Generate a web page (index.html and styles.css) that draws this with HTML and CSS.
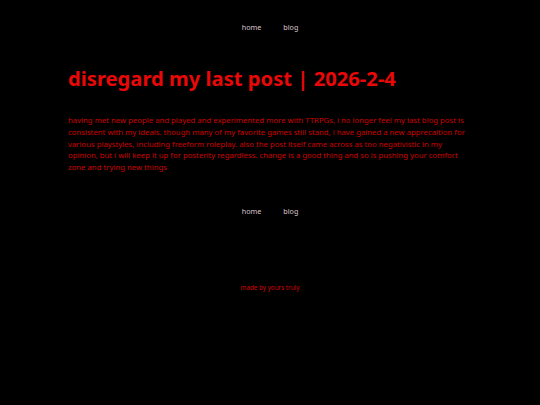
FILE: index.html
```html
<!DOCTYPE html>
<html>
<head>
<meta charset="utf-8">
<link rel="stylesheet" href="styles.css">
</head>
<body>
<nav class="nav top"><a href="#">home</a><a href="#">blog</a></nav>
<main class="content">
<h1 class="title">disregard my last post | 2026-2-4</h1>
<p class="text">having met new people and played and experimented more with TTRPGs, i no longer feel my last blog post is consistent with my ideals. though many of my favorite games still stand, i have gained a new apprecaition for various playstyles, including freeform roleplay. also the post itself came across as too negativistic in my opinion, but i will keep it up for posterity regardless. change is a good thing and so is pushing your comfort zone and trying new things</p>
</main>
<nav class="nav bottom"><a href="#">home</a><a href="#">blog</a></nav>
<footer class="footer">made by yours truly</footer>
</body>
</html>
```
FILE: styles.css
```css
html, body {
  margin: 0;
  padding: 0;
  background: #000;
}
body {
  font-family: "Noto Sans", "Open Sans", sans-serif;
  width: 540px;
  height: 405px;
}
.nav {
  display: flex;
  justify-content: center;
  gap: 22px;
  font-size: 7.2px;
  line-height: 11px;
}
.nav a {
  color: #dcc4cc;
  text-decoration: none;
}
.top {
  padding-top: 22px;
}
.content {
  width: 404px;
  margin: 0 auto;
}
.title {
  margin: 31px 0 0;
  color: #e80808;
  font-size: 20.2px;
  font-weight: 700;
  line-height: 28px;
}
.text {
  margin: 23px 0 0;
  color: #cc0000;
  font-size: 7.75px;
  line-height: 11.75px;
}
.bottom {
  margin-top: 32px;
}
.footer {
  margin-top: 66px;
  text-align: center;
  color: #d00000;
  font-size: 6.3px;
  line-height: 10px;
}
```
